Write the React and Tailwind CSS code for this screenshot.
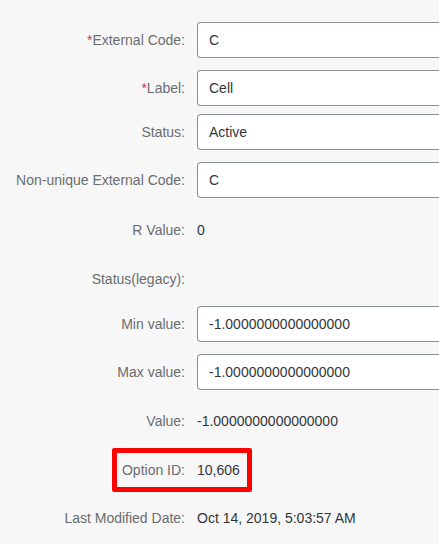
const rows = [
  { label: 'External Code', value: 'C', input: true, required: true, mt: 'mt-[22px]' },
  { label: 'Label', value: 'Cell', input: true, required: true, mt: 'mt-[12px]' },
  { label: 'Status', value: 'Active', input: true, mt: 'mt-[8px]' },
  { label: 'Non-unique External Code', value: 'C', input: true, mt: 'mt-[12px]' },
  { label: 'R Value', value: '0', mt: 'mt-[14px]' },
  { label: 'Status(legacy)', value: '', mt: 'mt-[13px]' },
  { label: 'Min value', value: '-1.0000000000000000', input: true, mt: 'mt-[9px]' },
  { label: 'Max value', value: '-1.0000000000000000', input: true, mt: 'mt-[12px]' },
  { label: 'Value', value: '-1.0000000000000000', mt: 'mt-[13px]' },
  { label: 'Option ID', value: '10,606', highlight: true, mt: 'mt-[13px]' },
  { label: 'Last Modified Date', value: 'Oct 14, 2019, 5:03:57 AM', mt: 'mt-[12px]' },
]

function FieldRow({ label, value, input, required, highlight, mt }) {
  return (
    <div className={`relative flex items-center h-9 ${mt}`}>
      <div className="w-[186px] shrink-0 text-right text-[#6a6d70] pr-px">
        {required && <span className="text-[#e9302f]">*</span>}
        {label}:
      </div>
      <div className="ml-[11px] flex-1 h-full flex items-center">
        {input ? (
          <div className="w-full h-full bg-white border border-[#89919a] border-r-0 rounded-l-[4px] flex items-center pl-[11px] text-[#32363a]">
            {value}
          </div>
        ) : (
          <span className="text-[#32363a]">{value}</span>
        )}
      </div>
      {highlight && (
        <div className="absolute left-[112px] top-[-4px] w-[140px] h-[44px] border-[5px] border-[#ff0000] rounded-[2px]" />
      )}
    </div>
  )
}

export default function App() {
  return (
    <div className="w-[439px] h-[544px] overflow-hidden bg-[#f7f7f7] text-[14px] font-['Liberation_Sans',sans-serif]">
      {rows.map(r => (
        <FieldRow key={r.label} {...r} />
      ))}
    </div>
  )
}
